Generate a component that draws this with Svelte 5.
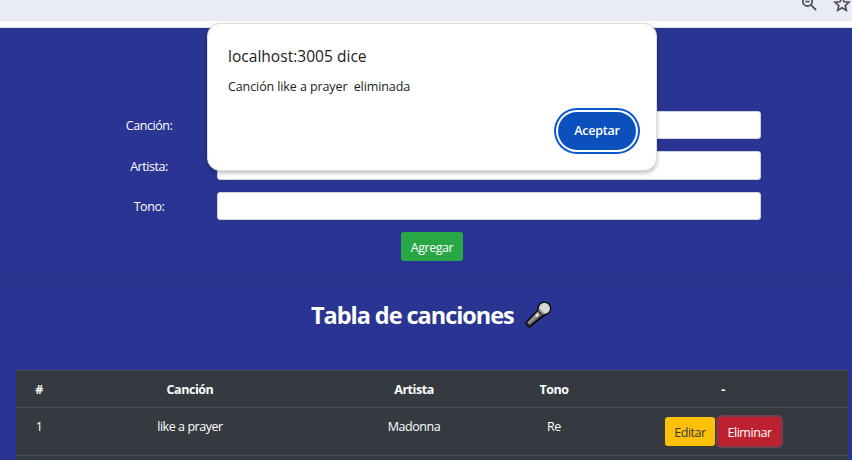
<script>
  const fields = ['Canción:', 'Artista:', 'Tono:'];
  const songs = [{ id: 1, title: 'like a prayer', artist: 'Madonna', key: 'Re' }];
</script>

<div class="window">
  <header class="toolbar">
    <svg class="zoom" width="18" height="18" viewBox="0 0 18 18" fill="none" stroke="#484a4d" stroke-width="1.7">
      <circle cx="6.5" cy="6.5" r="4.6" />
      <path d="M4.3 6.5h4.4M10 10l5.2 5.2" />
    </svg>
    <svg class="star" width="18" height="18" viewBox="0 0 18 18" fill="none" stroke="#484a4d" stroke-width="1.6">
      <path d="M9 2.2l2 4.6 5 .45-3.8 3.3 1.15 4.85L9 12.8l-4.35 2.6L5.8 10.550 2 7.250l5-.45z" />
    </svg>
  </header>
  <div class="strip"></div>
  <main>
    <form>
      {#each fields as field, i}
        <div class="row">
          <label for={'f' + i}>{field}</label>
          <input id={'f' + i} class:tall={i === 1} />
        </div>
      {/each}
      <button type="button" class="btn add">Agregar</button>
    </form>
    <hr />
    <hr class="second" />
    <h2>
      <span>Tabla de canciones</span>
      <svg width="28" height="28" viewBox="0 0 28 28">
        <path d="M14.500 8.500L20 14 5.300 26 1.700 22.400z" fill="#6b6b6b" stroke="#080808" stroke-width="1.800" stroke-linejoin="round" />
        <path d="M14.500 9.700L17.300 12 4.600 23.500 2.800 22z" fill="#929292" />
        <path d="M1.800 22l4 4" stroke="#222" stroke-width="2.500" />
        <circle cx="20.400" cy="7.400" r="6.300" fill="#d2d2d2" stroke="#080808" stroke-width="1.400" />
        <path d="M14.700 8.500l5 5" stroke="#858585" stroke-width="2" />
        <path d="M17 5l6 6M19 3l5 5M17 9l6-6M20 11l4-4" stroke="#e2e2e2" stroke-width=".7" />
        <ellipse cx="13.100" cy="14.200" rx="2" ry="1.500" transform="rotate(-45 13.100 14.200)" fill="#e6e6e6" />
      </svg>
    </h2>
    <table>
      <colgroup><col class="c1" /><col class="c2" /><col class="c3" /><col class="c4" /><col class="c5" /></colgroup>
      <thead>
        <tr><th>#</th><th>Canción</th><th>Artista</th><th>Tono</th><th>-</th></tr>
      </thead>
      <tbody>
        {#each songs as song}
          <tr>
            <td>{song.id}</td>
            <td class="title">{song.title}</td>
            <td>{song.artist}</td>
            <td>{song.key}</td>
            <td class="actions">
              <div>
                <button class="btn edit">Editar</button>
                <button class="btn remove">Eliminar</button>
              </div>
            </td>
          </tr>
        {/each}
        <tr class="next"><td colspan="5"></td></tr>
      </tbody>
    </table>
  </main>
  <div class="dialog" role="alertdialog">
    <div class="heading">localhost:3005 dice</div>
    <p>Canción like a prayer&nbsp; eliminada</p>
    <button class="accept">Aceptar</button>
  </div>
</div>

<style>
  :global(body) { margin: 0; overflow: hidden; }
  * { box-sizing: border-box; }
  .window {
    position: relative;
    width: 852px;
    height: 460px;
    overflow: hidden;
    font: 12.5px/18px "Open Sans", "Noto Sans", sans-serif;
    letter-spacing: -0.45px;
    color: #fff;
    background: #293493;
  }
  .toolbar {
    height: 21px;
    background: #e9ecf6;
    display: flex;
    justify-content: flex-end;
    gap: 14px;
    padding-right: 1px;
    overflow: hidden;
  }
  .toolbar svg { flex: none; margin-top: -5px; }
  .strip { height: 7px; background: #fff; border-bottom: 1px solid #dfe1e8; }
  form { padding-top: 83px; display: flex; flex-direction: column; gap: 12px; }
  .row { display: flex; align-items: center; }
  label { width: 136px; margin-left: 81px; text-align: center; padding-top: 2px; }
  input {
    width: 544px;
    height: 28px;
    border: 1px solid #ced4da;
    border-radius: 3px;
    background: #fff;
    padding: 0 8px;
  }
  input.tall { height: 29px; }
  button { font: inherit; letter-spacing: inherit; color: #fff; border: 0; padding: 0; }
  .btn { height: 29px; border-radius: 3px; padding-top: 3px; line-height: 26px; }
  .add { width: 62px; margin-left: 401px; background: #28a745; }
  hr { height: 1px; border: 0; margin: 12px 0 0; background: #252f84; }
  h2 {
    margin: 12px 0 0;
    height: 32px;
    display: flex;
    align-items: center;
    font-size: 23.5px;
    line-height: 32px;
    font-weight: 700;
    letter-spacing: -1.05px;
    padding-left: 311px;
  }
  h2 span { width: 213px; white-space: nowrap; }
  h2 svg { margin-top: -1px; }
  table {
    width: 832px;
    margin: 39px 0 0 16px;
    table-layout: fixed;
    border-spacing: 0;
    background: #343a40;
    text-align: center;
  }
  .c1 { width: 46px; }
  .c2 { width: 256px; }
  .c3 { width: 192px; }
  .c4 { width: 88px; }
  .c5 { width: 250px; }
  th, td { padding: 0; border-top: 1px solid #454d55; }
  th { height: 37px; font-weight: 700; padding-top: 2px; }
  td { height: 48px; vertical-align: top; padding-top: 10px; }
  .actions { padding-top: 9px; }
  .actions div { display: flex; gap: 3px; padding-left: 67px; }
  .edit { width: 50px; background: #ffc107; color: #343a40; }
  .remove { width: 63px; background: #bd2130; box-shadow: 0 0 0 2px #71404a; }
  .dialog {
    position: absolute;
    left: 207px;
    top: 23px;
    width: 450px;
    height: 148px;
    padding: 21px 20px 0 20px;
    border: 1px solid #dcdedc;
    border-radius: 13px;
    background: #fff;
    color: #202124;
    box-shadow: 0 2px 4px #0004;
  }
  .heading { font-size: 15.5px; line-height: 22px; font-weight: 500; letter-spacing: 0.03px; }
  p { margin: 11px 0 0; letter-spacing: -0.1px; }
  .accept {
    display: block;
    width: 78px;
    height: 38px;
    margin: 16px 0 0 auto;
    border-radius: 19px;
    background: #0b50bd;
    font-weight: 600;
    letter-spacing: -0.25px;
    box-shadow: 0 0 0 2px #fff, 0 0 0 4px #0b57d0;
  }
</style>
